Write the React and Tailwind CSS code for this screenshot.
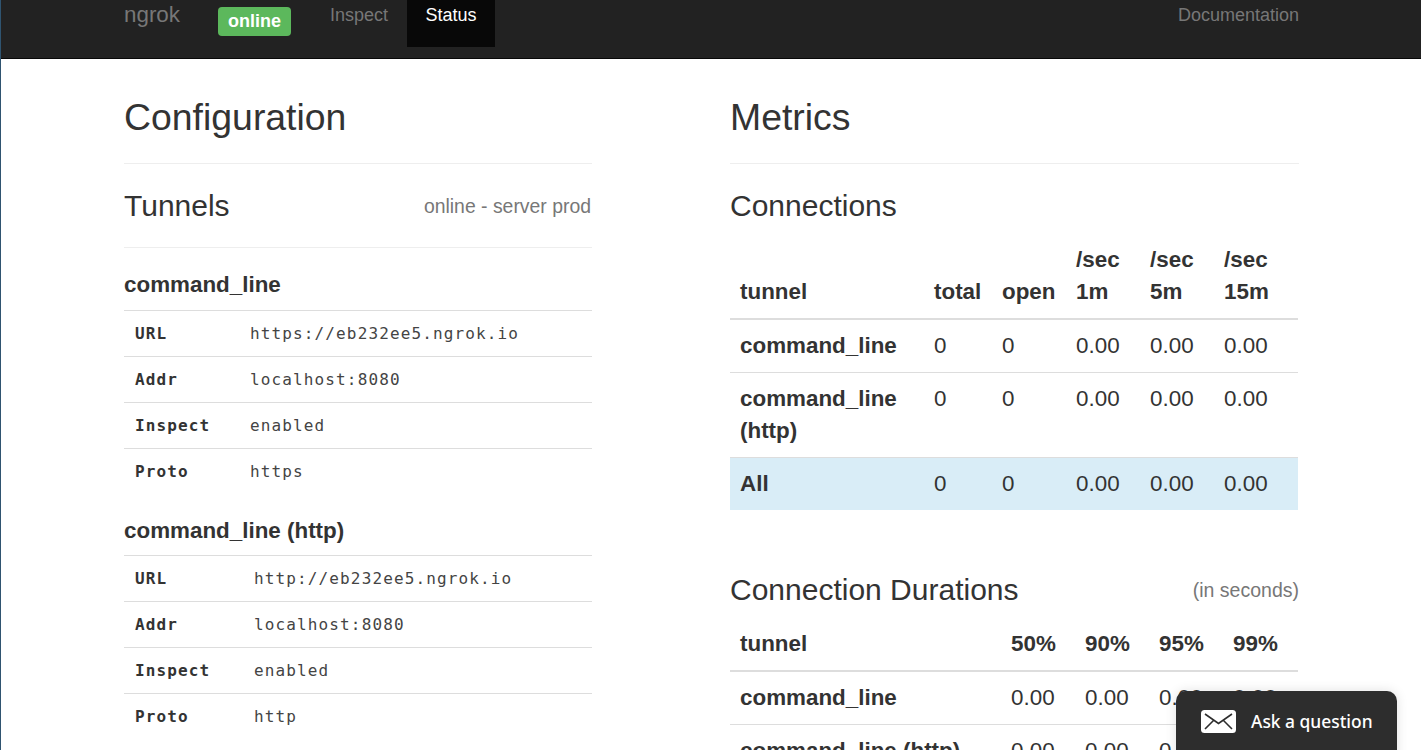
const sans = "font-['Liberation_Sans',Arial,sans-serif]";

function ConfigTable({ title, rows, labelWidth, className, cellPad }) {
  return (
    <div className={className}>
      <h4 className={"text-[22.4px] leading-[24px] font-bold text-[#333] " + (cellPad ? "mb-[12px]" : "mb-[13px]")}>{title}</h4>
      <table className="w-full table-fixed border-collapse font-['DejaVu_Sans_Mono',monospace] text-[16px] text-[#333]">
        <colgroup>
          <col className={labelWidth} />
          <col />
        </colgroup>
        <tbody>
          {rows.map(([k, v]) => (
            <tr key={k} className="border-t border-[#ddd] h-[46px]">
              <th className={"text-left font-bold pl-[11px] tracking-[1.1px] " + (cellPad ? "pt-[2px]" : "")}>{k}</th>
              <td className={"pl-[11px] tracking-[1.13px] font-normal text-[#444] " + (cellPad ? "pt-[2px]" : "")}>{v}</td>
            </tr>
          ))}
        </tbody>
      </table>
    </div>
  );
}

function MetricTable({ cols, head, rows, className }) {
  return (
    <table className={"w-[568px] table-fixed border-collapse text-[22.4px] leading-[32px] text-[#333] " + className}>
      <colgroup>
        {cols.map((c) => (
          <col key={c} className={c} />
        ))}
      </colgroup>
      <thead>
        <tr className="border-b-2 border-[#ddd]">
          {head.map((h, i) => (
            <th key={i} className="text-left align-bottom font-bold px-[10px] pt-[10px] pb-[10px]">
              {h}
            </th>
          ))}
        </tr>
      </thead>
      <tbody>
        {rows.map((r, i) => (
          <tr key={i} className={r.active ? "bg-[#d9edf7]" : "border-b border-[#ddd]"}>
            {r.cells.map((c, j) =>
              j === 0 ? (
                <th key={j} className="text-left align-top font-bold px-[10px] pt-[10px] pb-[10px]">
                  {c}
                </th>
              ) : (
                <td key={j} className="align-top px-[10px] pt-[10px] pb-[10px] font-normal">
                  {c}
                </td>
              )
            )}
          </tr>
        ))}
      </tbody>
    </table>
  );
}

export default function App() {
  const conn = ["w-[194px]", "w-[68px]", "w-[74px]", "w-[74px]", "w-[74px]", "w-[84px]"];
  const dur = ["w-[271px]", "w-[74px]", "w-[74px]", "w-[74px]", "w-[75px]"];
  return (
    <div className={"relative h-[750px] overflow-hidden bg-white border-l border-[#2f5470] " + sans}>
      <nav className="h-[59px] bg-[#222] border-b border-[#080808] pl-[123px] pr-[122px] flex items-start">
        <span className="text-[22.4px] leading-[30px] text-[#777] w-[94px]">ngrok</span>
        <span className="mt-[7px] w-[73px] h-[29px] rounded-[4px] bg-[#5cb85c] text-white font-bold text-[18px] leading-[29px] text-center">online</span>
        <a className="ml-[39px] text-[18px] leading-[30px] text-[#777]">Inspect</a>
        <a className="ml-[19px] w-[88px] h-[47px] bg-[#080808] text-white text-[18px] leading-[30px] text-center">Status</a>
        <a className="ml-auto text-[18px] leading-[30px] text-[#777]">Documentation</a>
      </nav>
      <main className="flex pl-[123px] pr-[121px] text-[#333]">
        <section className="w-[468px]">
          <h1 className="text-[37.4px] leading-[40px] pt-[38px] pb-[26px] border-b border-[#eee]">Configuration</h1>
          <div className="flex items-center justify-between h-[84px] border-b border-[#eee]">
            <h3 className="text-[30px] leading-[33px]">Tunnels</h3>
            <span className="text-[19.4px] text-[#777] mt-[2px] mr-[1px]">online - server prod</span>
          </div>
          <ConfigTable
            className="pt-[25px]"
            title="command_line"
            labelWidth="w-[115px]"
            rows={[["URL", "https://eb232ee5.ngrok.io"], ["Addr", "localhost:8080"], ["Inspect", "enabled"], ["Proto", "https"]]}
          />
          <ConfigTable
            className="pt-[24px]"
            cellPad
            title="command_line (http)"
            labelWidth="w-[119px]"
            rows={[["URL", "http://eb232ee5.ngrok.io"], ["Addr", "localhost:8080"], ["Inspect", "enabled"], ["Proto", "http"]]}
          />
        </section>
        <section className="ml-[138px] w-[569px]">
          <h1 className="text-[37.4px] leading-[40px] pt-[38px] pb-[26px] border-b border-[#eee]">Metrics</h1>
          <h3 className="text-[30px] leading-[33px] pt-[25px] pb-[12px]">Connections</h3>
          <MetricTable
            cols={conn}
            head={["tunnel", "total", "open", <>/sec<br />1m</>, <>/sec<br />5m</>, <>/sec<br />15m</>]}
            rows={[
              { cells: ["command_line", "0", "0", "0.00", "0.00", "0.00"] },
              { cells: ["command_line (http)", "0", "0", "0.00", "0.00", "0.00"] },
              { active: true, cells: ["All", "0", "0", "0.00", "0.00", "0.00"] },
            ]}
          />
          <div className="flex items-center justify-between mt-[63px] h-[33px]">
            <h3 className="text-[30px] leading-[33px]">Connection Durations</h3>
            <span className="text-[19.5px] text-[#777] mt-[2px]">(in seconds)</span>
          </div>
          <MetricTable
            className="mt-[12px]"
            cols={dur}
            head={["tunnel", "50%", "90%", "95%", "99%"]}
            rows={[
              { cells: ["command_line", "0.00", "0.00", "0.00", "0.00"] },
              { cells: ["command_line (http)", "0.00", "0.00", "0.00", "0.00"] },
            ]}
          />
        </section>
      </main>
      <div className="absolute left-[1175px] top-[691px] w-[221px] h-[70px] rounded-t-[10px] bg-[#2d2d2d] flex items-start pt-[19px] pl-[25px] shadow-[0_0_12px_rgba(0,0,0,0.12)]">
        <svg width="35" height="23" viewBox="0 0 35 23" className="shrink-0">
          <rect width="35" height="23" rx="3.5" fill="#fff" />
          <path d="M4 4 L17.5 13.5 L31 4 M4 19 L12.5 10.5 M31 19 L22.5 10.5" fill="none" stroke="#2d2d2d" strokeWidth="1.6" />
        </svg>
        <span className="ml-[15px] text-[17.4px] leading-[22px] font-medium text-white font-['Noto_Sans',sans-serif]">Ask a question</span>
      </div>
    </div>
  );
}
